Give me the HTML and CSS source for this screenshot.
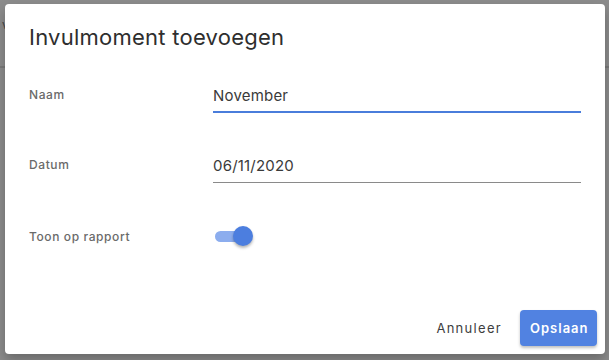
FILE: index.html
```html
<!DOCTYPE html>
<html>
<head>
<meta charset="utf-8">
<link rel="stylesheet" href="styles.css">
</head>
<body>
<div class="backdrop">
  <div class="bg-page">
    <span class="bg-glyph">v</span>
    <div class="bg-line"></div>
  </div>
  <div class="dialog">
    <h1 class="title">Invulmoment toevoegen</h1>
    <div class="form">
      <div class="row">
        <label class="label">Naam</label>
        <div class="field field-active">November</div>
      </div>
      <div class="row">
        <label class="label">Datum</label>
        <div class="field">06/11/2020</div>
      </div>
      <div class="row row-toggle">
        <label class="label">Toon op rapport</label>
        <div class="toggle">
          <div class="track"></div>
          <div class="thumb"></div>
        </div>
      </div>
    </div>
    <div class="actions">
      <button class="btn btn-text">Annuleer</button>
      <button class="btn btn-primary">Opslaan</button>
    </div>
  </div>
</div>
</body>
</html>
```

FILE: styles.css
```css
* { box-sizing: border-box; }
html, body {
  margin: 0;
  padding: 0;
  width: 609px;
  height: 360px;
  overflow: hidden;
  font-family: Inter, "Open Sans", sans-serif;
}
.backdrop {
  position: relative;
  width: 609px;
  height: 360px;
  background: #8c8c8c;
  padding: 4px 4px 0 5px;
}
.bg-page {
  position: absolute;
  inset: 0;
}
.bg-glyph {
  position: absolute;
  left: 2px;
  top: 17px;
  font-size: 12px;
  color: #444;
}
.bg-line {
  position: absolute;
  left: 0;
  right: 0;
  top: 66px;
  height: 2px;
  background: #7a7a7a;
}
.dialog {
  position: relative;
  width: 600px;
  height: 350px;
  background: #fff;
  border-radius: 4px;
  box-shadow: 0 6px 12px rgba(0,0,0,0.25);
  display: flex;
  flex-direction: column;
  padding: 0 8px 0 24px;
}
.title {
  margin: 0;
  padding: 20px 0 0 0;
  height: 58px;
  font-size: 22px;
  font-weight: 400;
  color: #2e2e2e;
  letter-spacing: 0.25px;
}
.form {
  display: flex;
  flex-direction: column;
  padding-top: 17px;
}
.row {
  display: flex;
  align-items: flex-start;
  height: 70px;
}
.label {
  width: 184px;
  font-size: 12px;
  font-weight: 500;
  color: #6a6a6a;
  padding-top: 8px;
  letter-spacing: 0.6px;
}
.field {
  width: 368px;
  height: 34px;
  font-size: 15px;
  color: #3a3a3a;
  padding-top: 7px;
  border-bottom: 1px solid #8a8a8a;
  letter-spacing: 0.2px;
}
.field-active {
  border-bottom: 2px solid #4a7ddb;
}
.row-toggle .label { padding-top: 10px; }
.toggle {
  position: relative;
  width: 44px;
  height: 24px;
  margin-top: 5px;
  margin-left: 1px;
}
.track {
  position: absolute;
  left: 1px;
  top: 7px;
  width: 32px;
  height: 11px;
  border-radius: 6px;
  background: #8cadee;
}
.thumb {
  position: absolute;
  left: 19px;
  top: 2px;
  width: 20px;
  height: 20px;
  border-radius: 50%;
  background: #4c7edf;
  box-shadow: 0 2px 3px rgba(0,0,0,0.3);
}
.actions {
  margin-top: auto;
  display: flex;
  justify-content: flex-end;
  align-items: center;
  gap: 8px;
  padding-bottom: 8px;
}
.btn {
  border: none;
  font-family: inherit;
  font-size: 13px;
  letter-spacing: 1.3px;
  height: 36px;
  border-radius: 4px;
  padding: 0 10px;
  cursor: pointer;
}
.btn-text {
  background: transparent;
  color: #3e3e3e;
}
.btn-primary {
  width: 77px;
  background: #5182e1;
  color: #fff;
  font-weight: 600;
  letter-spacing: 1px;
  box-shadow: 0 2px 3px rgba(0,0,0,0.25);
}
```
